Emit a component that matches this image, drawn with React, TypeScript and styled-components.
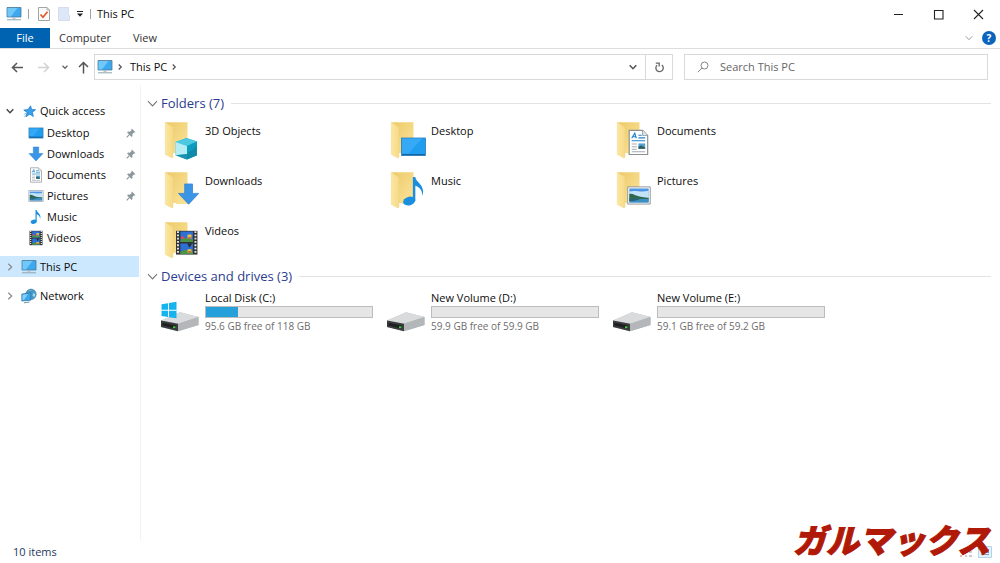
import React from "react";
import styled, { createGlobalStyle } from "styled-components";

const GlobalStyle = createGlobalStyle`
  *, *::before, *::after { box-sizing: border-box; }
  body {
    margin: 0;
    background: #fff;
    color: #0c0c0c;
    font-family: "Open Sans", "Noto Sans", "Noto Sans CJK JP", sans-serif;
    font-size: 11px;
    line-height: 16px;
  }
  button, input { font: inherit; color: inherit; }
  ul { list-style: none; margin: 0; padding: 0; }
  a { color: inherit; text-decoration: none; }
  svg { display: block; flex: none; }
`;

/* ---------- layout ---------- */

const Window = styled.div`
  position: relative;
  display: flex;
  flex-direction: column;
  min-height: 100vh;
`;

const TitleBar = styled.header`
  display: flex;
  align-items: center;
  height: 28px;
  padding: 0 2px 0 6px;
`;

const QuickTools = styled.div`
  display: flex;
  align-items: center;
  gap: 6px;
`;

const IconButton = styled.button<{ $w?: number; $h?: number }>`
  display: flex;
  align-items: center;
  justify-content: center;
  flex: none;
  width: ${(p) => p.$w ?? 16}px;
  height: ${(p) => p.$h ?? 20}px;
  padding: 0;
  border: 0;
  background: transparent;
`;

const Separator = styled.span`
  width: 1px;
  height: 10px;
  background: #a0a0a0;
`;

const WindowTitle = styled.h1`
  margin: 0 0 0 6px;
  font-size: 11px;
  font-weight: 400;
`;

const WindowControls = styled.div`
  display: flex;
  margin-left: auto;
`;

const Ribbon = styled.nav`
  display: flex;
  align-items: center;
  height: 21px;
  border-bottom: 1px solid #dcdddd;
`;

const RibbonTab = styled.button<{ $primary?: boolean; $w: number }>`
  width: ${(p) => p.$w}px;
  height: 20px;
  padding: 0;
  border: 0;
  background: ${(p) => (p.$primary ? "#0063b1" : "transparent")};
  color: ${(p) => (p.$primary ? "#fff" : "#333")};
`;

const RibbonEnd = styled.div`
  display: flex;
  align-items: center;
  gap: 4px;
  margin-left: auto;
  padding-right: 3px;
`;

const Toolbar = styled.div`
  display: flex;
  align-items: center;
  padding: 5px 12px 5px 9px;
`;

const NavButtons = styled.div`
  display: flex;
  align-items: center;
  width: 85px;
  flex: none;
`;

const AddressBar = styled.div`
  display: flex;
  align-items: center;
  flex: 1;
  min-width: 0;
  height: 26px;
  border: 1px solid #d9d9d9;
`;

const Crumbs = styled.div`
  display: flex;
  align-items: center;
  flex: 1;
  gap: 4px;
  padding-left: 2px;
`;

const CrumbLabel = styled.span`
  padding-left: 3px;
`;

const Refresh = styled(IconButton)`
  border-left: 1px solid #d9d9d9;
`;

const SearchBox = styled.label`
  display: flex;
  align-items: center;
  gap: 11px;
  flex: 0 1 304px;
  height: 26px;
  margin-left: 11px;
  padding-left: 12px;
  border: 1px solid #d9d9d9;
`;

const SearchInput = styled.input`
  flex: 1;
  min-width: 0;
  padding: 0;
  border: 0;
  outline: 0;
  background: transparent;
  &::placeholder { color: #666; opacity: 1; }
`;

const Body = styled.div`
  display: flex;
  flex: 1;
`;

const Sidebar = styled.nav`
  display: flex;
  flex-direction: column;
  gap: 8px;
  width: 141px;
  flex: none;
  padding: 15px 1px 0 0;
  border-right: 1px solid #f3f3f3;
`;

const TreeRow = styled.a<{ $child?: boolean; $selected?: boolean; $head?: boolean }>`
  display: flex;
  align-items: center;
  height: ${(p) => (p.$head ? 22 : 21)}px;
  padding: 0 3px 0 ${(p) => (p.$child ? 28 : 3)}px;
  background: ${(p) => (p.$selected ? "#cce8ff" : "transparent")};
`;

const TreeToggle = styled.span`
  display: flex;
  justify-content: center;
  width: 14px;
  margin-right: 4px;
`;

const TreeIcon = styled.span`
  display: flex;
  justify-content: center;
  width: 16px;
`;

const TreeLabel = styled.span`
  flex: 1;
  margin-left: 3px;
  white-space: nowrap;
`;

const Content = styled.main`
  flex: 1;
  min-width: 0;
  padding: 8px 9px 0 6px;
`;

const GroupHeader = styled.h2`
  display: flex;
  align-items: center;
  gap: 3px;
  height: 20px;
  margin: 0 0 3px;
  color: #2b3c8f;
  font-size: 13px;
  font-weight: 400;
  white-space: nowrap;
  &::after {
    content: "";
    flex: 1;
    height: 1px;
    margin-left: 4px;
    background: #e3e3e6;
  }
`;

const TileGrid = styled.ul`
  display: grid;
  grid-template-columns: repeat(auto-fill, 226px);
  padding-left: 13px;
`;

const FolderTile = styled.a`
  display: flex;
  gap: 5px;
  height: 50px;
  padding-top: 5px;
`;

const TileName = styled.span`
  display: block;
  padding-top: 2px;
`;

const DriveTile = styled.a`
  display: flex;
  gap: 5px;
  padding-top: 1px;
`;

const DriveInfo = styled.span`
  display: flex;
  flex-direction: column;
  width: 168px;
`;

const Capacity = styled.span`
  height: 12px;
  border: 1px solid #bcbcbc;
  background: #e6e6e6;
`;

const Used = styled.span`
  display: block;
  height: 100%;
  background: #26a0da;
`;

const FreeSpace = styled.span`
  color: #6d6d6d;
  font-size: 10px;
`;

const StatusBar = styled.footer`
  display: flex;
  align-items: center;
  justify-content: space-between;
  height: 22px;
  padding: 0 8px 0 13px;
  color: #1e395b;
`;

const ViewSwitch = styled.div`
  display: flex;
  gap: 4px;
`;

const Brand = styled.div`
  position: absolute;
  right: 4px;
  bottom: 0;
  padding: 0 6px;
  color: #b01808;
  font-family: "Noto Sans CJK JP", sans-serif;
  font-size: 33px;
  font-style: italic;
  font-weight: 900;
  line-height: 48px;
  white-space: nowrap;
  -webkit-text-stroke: 1px #b01808;
`;

/* ---------- icons ---------- */

const PcIcon = () => (
  <svg width="16" height="16" viewBox="0 0 16 16">
    <path d="M1 1.500h14v9.500H1z" fill="#3ea8ee" stroke="#4a7896" strokeWidth=".8" />
    <path d="M1.500 2h10L5 10.500H1.500z" fill="#70c8f9" />
    <path d="M6.500 11.500h3v1.500h-3z" fill="#b5c6d0" />
    <path d="M1 13.800h14" stroke="#8ca3b0" strokeWidth="1" />
  </svg>
);

type ChevronProps = { dir?: "down" | "right"; size?: number; color?: string; weight?: number };
const Chevron = ({ dir = "down", size = 8, color = "#555", weight = 1.3 }: ChevronProps) => (
  <svg width={size} height={size} viewBox="0 0 8 8" fill="none" stroke={color} strokeWidth={weight}>
    <path d={dir === "down" ? "M.7 2.300 4 5.700 7.300 2.300" : "M2.300.7 5.700 4 2.300 7.300"} />
  </svg>
);

const PropertiesIcon = () => (
  <svg width="14" height="16" viewBox="0 0 14 16">
    <path d="M1.500 1.500h8.500L12.500 4v10.500h-11z" fill="#fbfbfb" stroke="#a4a4a4" />
    <path d="M10 1.500V4h2.500" fill="none" stroke="#a4a4a4" strokeWidth=".8" />
    <path d="m3.500 8.500 2.500 2.800 4.500-5.500" fill="none" stroke="#dd5a2b" strokeWidth="1.700" />
  </svg>
);

const NewFolderIcon = () => (
  <svg width="14" height="16" viewBox="0 0 14 16">
    <path d="M1.500 1.500h10v7l1 1v5h-11z" fill="#dce7f7" stroke="#cbd7e8" strokeWidth=".8" />
  </svg>
);

const CustomizeIcon = () => (
  <svg width="8" height="8" viewBox="0 0 8 8">
    <path d="M1 1.500h6" stroke="#222" />
    <path d="M1 3.500h6L4 6.800z" fill="#222" />
  </svg>
);

const MinimizeIcon = () => (
  <svg width="11" height="11" viewBox="0 0 11 11"><path d="M1 5.500h9" stroke="#222" /></svg>
);
const MaximizeIcon = () => (
  <svg width="11" height="11" viewBox="0 0 11 11"><path d="M1.500 1.500h8.500v8.500h-8.500z" fill="none" stroke="#222" strokeWidth="1.100" /></svg>
);
const CloseIcon = () => (
  <svg width="11" height="11" viewBox="0 0 11 11"><path d="m1 1 9 9m0-9-9 9" stroke="#222" strokeWidth="1.100" /></svg>
);

const HelpBadge = styled.span`
  display: flex;
  align-items: center;
  justify-content: center;
  width: 14px;
  height: 14px;
  border-radius: 50%;
  background: #0a64bc;
  color: #fff;
  font-size: 10px;
  font-weight: 700;
  line-height: 14px;
`;

const ArrowIcon = ({ kind, color }: { kind: "back" | "forward" | "up"; color: string }) => {
  const paths = {
    back: "M12 6.500H1.500M6 2 1.500 6.500 6 11",
    forward: "M1 6.500h10.500M7 2l4.500 4.500L7 11",
    up: "M6.500 12.500V1.500M2 6l4.500-4.500L11 6",
  };
  return (
    <svg width="13" height="13" viewBox="0 0 13 13" fill="none" stroke={color} strokeWidth="1.500">
      <path d={paths[kind]} />
    </svg>
  );
};

const RefreshIcon = () => (
  <svg width="11" height="11" viewBox="0 0 11 11" fill="none" stroke="#666" strokeWidth="1.300">
    <path d="M7.800 3A3.700 3.700 0 1 1 3 3.300" />
    <path d="M1.800 1.200h3.400v3.400" />
  </svg>
);

const SearchIcon = () => (
  <svg width="12" height="12" viewBox="0 0 12 12" fill="none" stroke="#858585">
    <circle cx="7.500" cy="4.500" r="3.500" />
    <path d="M5 7 .8 11.200" />
  </svg>
);

const StarIcon = () => (
  <svg width="13" height="13" viewBox="0 0 13 13">
    <path d="m7.600.8 1 3.700 4 .2-3.200 2.500 1 4.300-3.600-2.300-3.900 2.500 1.200-4.200L.8 5l4.200-.4z" fill="#3aa0ec" stroke="#1978c8" strokeWidth=".7" />
    <path d="M.8 9.500 3 8.300M1.300 11.700l1.700-1" stroke="#62b4ee" strokeWidth=".8" />
  </svg>
);

const PinIcon = () => (
  <svg width="10" height="10" viewBox="0 0 10 10">
    <path d="m5.800.5 3.700 3.700-1 .4-.5-.2-1.700 1.700.2 1.900-.9.900-4.500-4.500.9-.9 1.900.2 1.700-1.700-.2-.5z" fill="#8b979d" />
    <path d="M3.300 6.700.7 9.300" stroke="#8b979d" strokeWidth="1.100" />
  </svg>
);

const Screen = ({ x, y, w, h }: { x: number; y: number; w: number; h: number }) => (
  <g>
    <rect x={x} y={y} width={w} height={h} fill="#219df0" stroke="#2a7ab8" strokeWidth=".8" />
    <path d={`M${x + 0.5} ${y + 0.5}h${w - 4}L${x + w * 0.3} ${y + h - 2}H${x + 0.5}z`} fill="#35a9f6" />
    <path d={`M${x + 0.5} ${y + h - 0.8}h${w - 1}`} stroke="#125a92" strokeWidth="1" />
  </g>
);

const DownArrow = () => <path d="M5.300 1h5.400v6.500h4.300L8 15 1 7.500h4.300z" fill="#3b95e6" stroke="#2f80d0" strokeWidth=".5" />;
const Note = () => (
  <g fill="#1a8fe0">
    <ellipse cx="5.700" cy="12.700" rx="3" ry="2.100" transform="rotate(-15 5.700 12.700)" />
    <path d="M7.500 1h1.200c.2 2.800 5.300 4 3.300 9.300.2-2.800-1.200-4.300-3.300-5v7.400H7.500z" />
  </g>
);
const Page = () => (
  <g>
    <path d="M2.500.8h8l3 3v11.400h-11z" fill="#fff" stroke="#8b9094" strokeWidth=".7" />
    <path d="M10.500.8v3h3" fill="#e8ebed" stroke="#8b9094" strokeWidth=".5" />
    <path d="m4 5.500 1.800-3 .9 3M4.700 4.600h1.600M8 3.700h2M8 5.300h4M4 7h8" fill="none" stroke="#2184cc" strokeWidth=".7" />
    <path d="M4 9h3M4 10.500h3M4 12h3M4 13.500h8" stroke="#a2abb1" strokeWidth=".6" />
    <path d="M8 8.600h4v3.200H8z" fill="#579fd1" />
    <path d="M8 10.500 9.500 9.800 12 11v.8H8z" fill="#2e5f56" />
  </g>
);
const Photo = () => (
  <g>
    <path d="M.8 2.500h14.400v11H.8z" fill="#fff" stroke="#8a8f93" strokeWidth=".6" />
    <path d="M1.800 3.500h12.400v9H1.800z" fill="#4f96e4" />
    <path d="M1.800 5.500c4-1.300 7 .8 12.400-.5v4.500H1.800z" fill="#c4e2f8" />
    <path d="M1.800 7c2-.6 3 .5 5 1.200 2 .6 4 .9 7.400 1.400v.9H1.800z" fill="#2f684f" />
    <path d="M1.800 10.200h12.400v2.300H1.800z" fill="#3f8ec0" />
    <path d="M1.800 10.200h7l-4 1.300h-3z" fill="#28617c" />
  </g>
);
const Film = () => (
  <g>
    <path d="M1.500.8h13v14.400h-13z" fill="#333" />
    <path d="M2.700 1v14M13.300 1v14" stroke="#e8e8e8" strokeWidth="1.200" strokeDasharray="1.100 .9" />
    <path d="M4.200 1.200h7.600v6.400H4.200zM4.200 8.500h7.600v6.300H4.200z" fill="#2c6fd6" />
    <path d="M4.200 6.200 7 5l4.800 1v1.600H4.200zM4.200 13.500 7 12.300l4.800 1v1.500H4.200z" fill="#4a9544" />
    <path d="M8.500 3h2.400v2.500H8.500zM8.500 12h2.400v2H8.500z" fill="#eec435" />
    <path d="M4.500 4.300h2v1.500h-2zM9 4.600h1.400v1H9zM9 13h1.400v1H9z" fill="#d64b55" />
    <path d="M8.300 8.500h3l-1.600 2.500z" fill="#2b2b2b" />
  </g>
);

type Kind = "objects" | "desktop" | "documents" | "downloads" | "music" | "pictures" | "videos";

const SmallIcon = ({ kind }: { kind: Kind }) => (
  <svg width="16" height="16" viewBox="0 0 16 16">
    {kind === "desktop" && <Screen x={1} y={3} w={14} h={10} />}
    {kind === "downloads" && <DownArrow />}
    {kind === "documents" && <Page />}
    {kind === "pictures" && <Photo />}
    {kind === "music" && <Note />}
    {kind === "videos" && <Film />}
  </svg>
);

const NetworkIcon = () => (
  <svg width="16" height="16" viewBox="0 0 16 16">
    <circle cx="10" cy="6.300" r="5.200" fill="#4a9cc6" stroke="#347a9e" strokeWidth=".6" />
    <path d="M7.500 2.300c2-.8 2.500 1 4.500.6M12.500 5l2 1.500-1.200 2.500-1.800-1.500z" fill="#a9dcec" />
    <path d="m.8 6 9-1.300v7.500l-9 .8z" fill="#37a6ee" stroke="#2c709c" strokeWidth=".7" />
    <path d="m1.500 6.800 5.500-.8-4 6-1.500.1z" fill="#87cff9" />
    <path d="M3 14.800 8.500 14" stroke="#6e93a8" />
  </svg>
);

const FolderIcon = ({ kind }: { kind: Kind }) => (
  <svg width="40" height="40" viewBox="0 0 40 40">
    <defs>
      <linearGradient id={`front-${kind}`} x1="0" x2="1" y1="0" y2="0">
        <stop offset="0" stopColor="#fbe7a0" />
        <stop offset="1" stopColor="#f6da87" />
      </linearGradient>
      <linearGradient id={`back-${kind}`} x1="0" x2="1" y1="0" y2="1">
        <stop offset="0" stopColor="#edca69" />
        <stop offset="1" stopColor="#fbe49b" />
      </linearGradient>
    </defs>
    <path d="M6 1.200h21.500V33H13z" fill={`url(#back-${kind})`} />
    <path d="M13 32h3v2.500l-3 1.500z" fill="#fff" />
    <path d="M5.300 1.200 13 6.500v29.700l-1 .8-6.700-3.500z" fill={`url(#front-${kind})`} stroke="#efd27e" strokeWidth=".4" />
    {kind === "objects" && (
      <g>
        <path d="m26.500 17 10.500 3.500v13.800L26.500 38.500 15.500 34.300V21z" fill="#29b4d2" />
        <path d="M15.500 21l11-4L37 20.500 27 25z" fill="#4cc9e0" />
        <path d="M15.500 21 27 25v8l-11.500 1.300z" fill="#b4edf3" />
        <path d="M27 25 37 20.500v13.800L27 38.500z" fill="#0c9cbf" />
        <path d="M15.500 34.300 27 33v5.500zM27 33l10-8v9.300l-10 4.200z" fill="#12839f" opacity=".7" />
      </g>
    )}
    {kind === "desktop" && <Screen x={15.500} y={17} w={24} h={17.500} />}
    {kind === "documents" && <g transform="translate(13 8) scale(1.680)"><Page /></g>}
    {kind === "downloads" && <g transform="translate(17 11.500) scale(1.450)"><DownArrow /></g>}
    {kind === "music" && <g transform="translate(11.500 4) scale(2.050)"><Note /></g>}
    {kind === "pictures" && <g transform="translate(14.500 12) scale(1.560)"><Photo /></g>}
    {kind === "videos" && <g transform="translate(13.500 8.500) scale(1.650)"><Film /></g>}
  </svg>
);

const DriveIcon = ({ system }: { system?: boolean }) => (
  <svg width="40" height="44" viewBox="0 0 40 44">
    <path d="m1 30.500 19-8.200 18.500 4.700v8L18 41.200 1 37z" fill="#b9bbbd" />
    <path d="M1 30.500 20 22.300 38.500 27 18 33.800z" fill="#d9dbdd" />
    <path d="M18 33.800 38.500 27v8L18 41.200z" fill="#b4b7ba" />
    <path d="m1 30.500 17 3.300v7.400L1 37z" fill="#3a3c3e" />
    <path d="m2.500 32.800 13.500 2.700v3.200L2.500 35.500z" fill="#1d1f20" />
    <path d="M13 36.300h2.500v1.900H13z" fill="#43c843" />
    {system && (
      <path d="m1.500 14.200 6.500-1v6.500H1.500zM9 13l7.500-1.200v7.900H9zM1.500 20.700H8v6.300l-6.500-1zM9 20.700h7.500v7.600L9 27.200z" fill="#16b4ee" />
    )}
  </svg>
);

const DetailsIcon = () => (
  <svg width="14" height="12" viewBox="0 0 14 12">
    <path d="M1 6h2M1 10h2" stroke="#c77d6a" />
    <path d="M6 2h2M6 6h2M6 10h2M10 2h3M10 6h3M10 10h3" stroke="#999" />
  </svg>
);

const TilesIcon = () => (
  <svg width="14" height="12" viewBox="0 0 14 12">
    <path d="M.5.500h13v11H.500z" fill="#e3f1fb" stroke="#b2d3ea" />
    <path d="M3 3h8v4H3z" fill="#4b8fd0" />
    <path d="M3 8.500h8" stroke="#8a9ba8" />
  </svg>
);

/* ---------- data ---------- */

const quickAccess: { kind: Kind; label: string; pinned?: boolean }[] = [
  { kind: "desktop", label: "Desktop", pinned: true },
  { kind: "downloads", label: "Downloads", pinned: true },
  { kind: "documents", label: "Documents", pinned: true },
  { kind: "pictures", label: "Pictures", pinned: true },
  { kind: "music", label: "Music" },
  { kind: "videos", label: "Videos" },
];

const folders: { kind: Kind; label: string }[] = [
  { kind: "objects", label: "3D Objects" },
  { kind: "desktop", label: "Desktop" },
  { kind: "documents", label: "Documents" },
  { kind: "downloads", label: "Downloads" },
  { kind: "music", label: "Music" },
  { kind: "pictures", label: "Pictures" },
  { kind: "videos", label: "Videos" },
];

const drives = [
  { name: "Local Disk (C:)", free: "95.6 GB free of 118 GB", used: 19, system: true },
  { name: "New Volume (D:)", free: "59.9 GB free of 59.9 GB", used: 0 },
  { name: "New Volume (E:)", free: "59.1 GB free of 59.2 GB", used: 0 },
];

export default function App() {
  return (
    <>
      <GlobalStyle />
      <Window>
        <TitleBar>
          <QuickTools>
            <PcIcon />
            <Separator />
            <IconButton aria-label="Properties" $w={18}><PropertiesIcon /></IconButton>
            <IconButton aria-label="New folder" $w={10}><NewFolderIcon /></IconButton>
            <IconButton aria-label="Customize toolbar" $w={9}><CustomizeIcon /></IconButton>
            <Separator />
          </QuickTools>
          <WindowTitle>This PC</WindowTitle>
          <WindowControls>
            <IconButton aria-label="Minimize" $w={40} $h={28}><MinimizeIcon /></IconButton>
            <IconButton aria-label="Maximize" $w={40} $h={28}><MaximizeIcon /></IconButton>
            <IconButton aria-label="Close" $w={40} $h={28}><CloseIcon /></IconButton>
          </WindowControls>
        </TitleBar>

        <Ribbon>
          <RibbonTab $primary $w={50}>File</RibbonTab>
          <RibbonTab $w={70}>Computer</RibbonTab>
          <RibbonTab $w={50}>View</RibbonTab>
          <RibbonEnd>
            <IconButton aria-label="Expand ribbon"><Chevron color="#999" weight={1} /></IconButton>
            <IconButton aria-label="Help"><HelpBadge>?</HelpBadge></IconButton>
          </RibbonEnd>
        </Ribbon>

        <Toolbar>
          <NavButtons>
            <IconButton aria-label="Back"><ArrowIcon kind="back" color="#555" /></IconButton>
            <IconButton aria-label="Forward" $w={37}><ArrowIcon kind="forward" color="#d2d2d2" /></IconButton>
            <IconButton aria-label="Recent locations" $w={6}><Chevron size={6} color="#666" weight={1.6} /></IconButton>
            <IconButton aria-label="Up" $w={30}><ArrowIcon kind="up" color="#555" /></IconButton>
          </NavButtons>
          <AddressBar>
            <Crumbs>
              <PcIcon />
              <Chevron dir="right" size={6} weight={1.6} />
              <CrumbLabel>This PC</CrumbLabel>
              <Chevron dir="right" size={6} weight={1.6} />
            </Crumbs>
            <IconButton aria-label="Previous locations" $w={24} $h={24}><Chevron color="#555" weight={1.6} /></IconButton>
            <Refresh aria-label="Refresh" $w={27} $h={24}><RefreshIcon /></Refresh>
          </AddressBar>
          <SearchBox>
            <SearchIcon />
            <SearchInput type="text" aria-label="Search This PC" placeholder="Search This PC" />
          </SearchBox>
        </Toolbar>

        <Body>
          <Sidebar aria-label="Locations">
            <div>
              <TreeRow href="#quick-access" $head>
                <TreeToggle><Chevron color="#444" weight={1.4} /></TreeToggle>
                <TreeIcon><StarIcon /></TreeIcon>
                <TreeLabel>Quick access</TreeLabel>
              </TreeRow>
              <ul>
                {quickAccess.map((item) => (
                  <li key={item.label}>
                    <TreeRow href={`#${item.kind}`} $child>
                      <SmallIcon kind={item.kind} />
                      <TreeLabel>{item.label}</TreeLabel>
                      {item.pinned && <PinIcon />}
                    </TreeRow>
                  </li>
                ))}
              </ul>
            </div>
            <TreeRow href="#this-pc" $selected>
              <TreeToggle><Chevron dir="right" color="#8a8a8a" weight={1.2} /></TreeToggle>
              <PcIcon />
              <TreeLabel>This PC</TreeLabel>
            </TreeRow>
            <TreeRow href="#network">
              <TreeToggle><Chevron dir="right" color="#8a8a8a" weight={1.2} /></TreeToggle>
              <NetworkIcon />
              <TreeLabel>Network</TreeLabel>
            </TreeRow>
          </Sidebar>

          <Content>
            <section>
              <GroupHeader><Chevron size={11} color="#777" weight={0.8} />Folders (7)</GroupHeader>
              <TileGrid>
                {folders.map((f) => (
                  <li key={f.label}>
                    <FolderTile href={`#${f.kind}`}>
                      <FolderIcon kind={f.kind} />
                      <TileName>{f.label}</TileName>
                    </FolderTile>
                  </li>
                ))}
              </TileGrid>
            </section>
            <section>
              <GroupHeader><Chevron size={11} color="#777" weight={0.8} />Devices and drives (3)</GroupHeader>
              <TileGrid>
                {drives.map((d) => (
                  <li key={d.name}>
                    <DriveTile href="#drive">
                      <DriveIcon system={d.system} />
                      <DriveInfo>
                        <span>{d.name}</span>
                        <Capacity role="progressbar" aria-label={d.name} aria-valuenow={d.used}>
                          <Used style={{ width: `${d.used}%` }} />
                        </Capacity>
                        <FreeSpace>{d.free}</FreeSpace>
                      </DriveInfo>
                    </DriveTile>
                  </li>
                ))}
              </TileGrid>
            </section>
          </Content>
        </Body>

        <StatusBar>
          <span>10 items</span>
          <ViewSwitch>
            <IconButton aria-label="Details view" $h={12}><DetailsIcon /></IconButton>
            <IconButton aria-label="Tiles view" $w={14} $h={12}><TilesIcon /></IconButton>
          </ViewSwitch>
        </StatusBar>
        <Brand>ガルマックス</Brand>
      </Window>
    </>
  );
}
